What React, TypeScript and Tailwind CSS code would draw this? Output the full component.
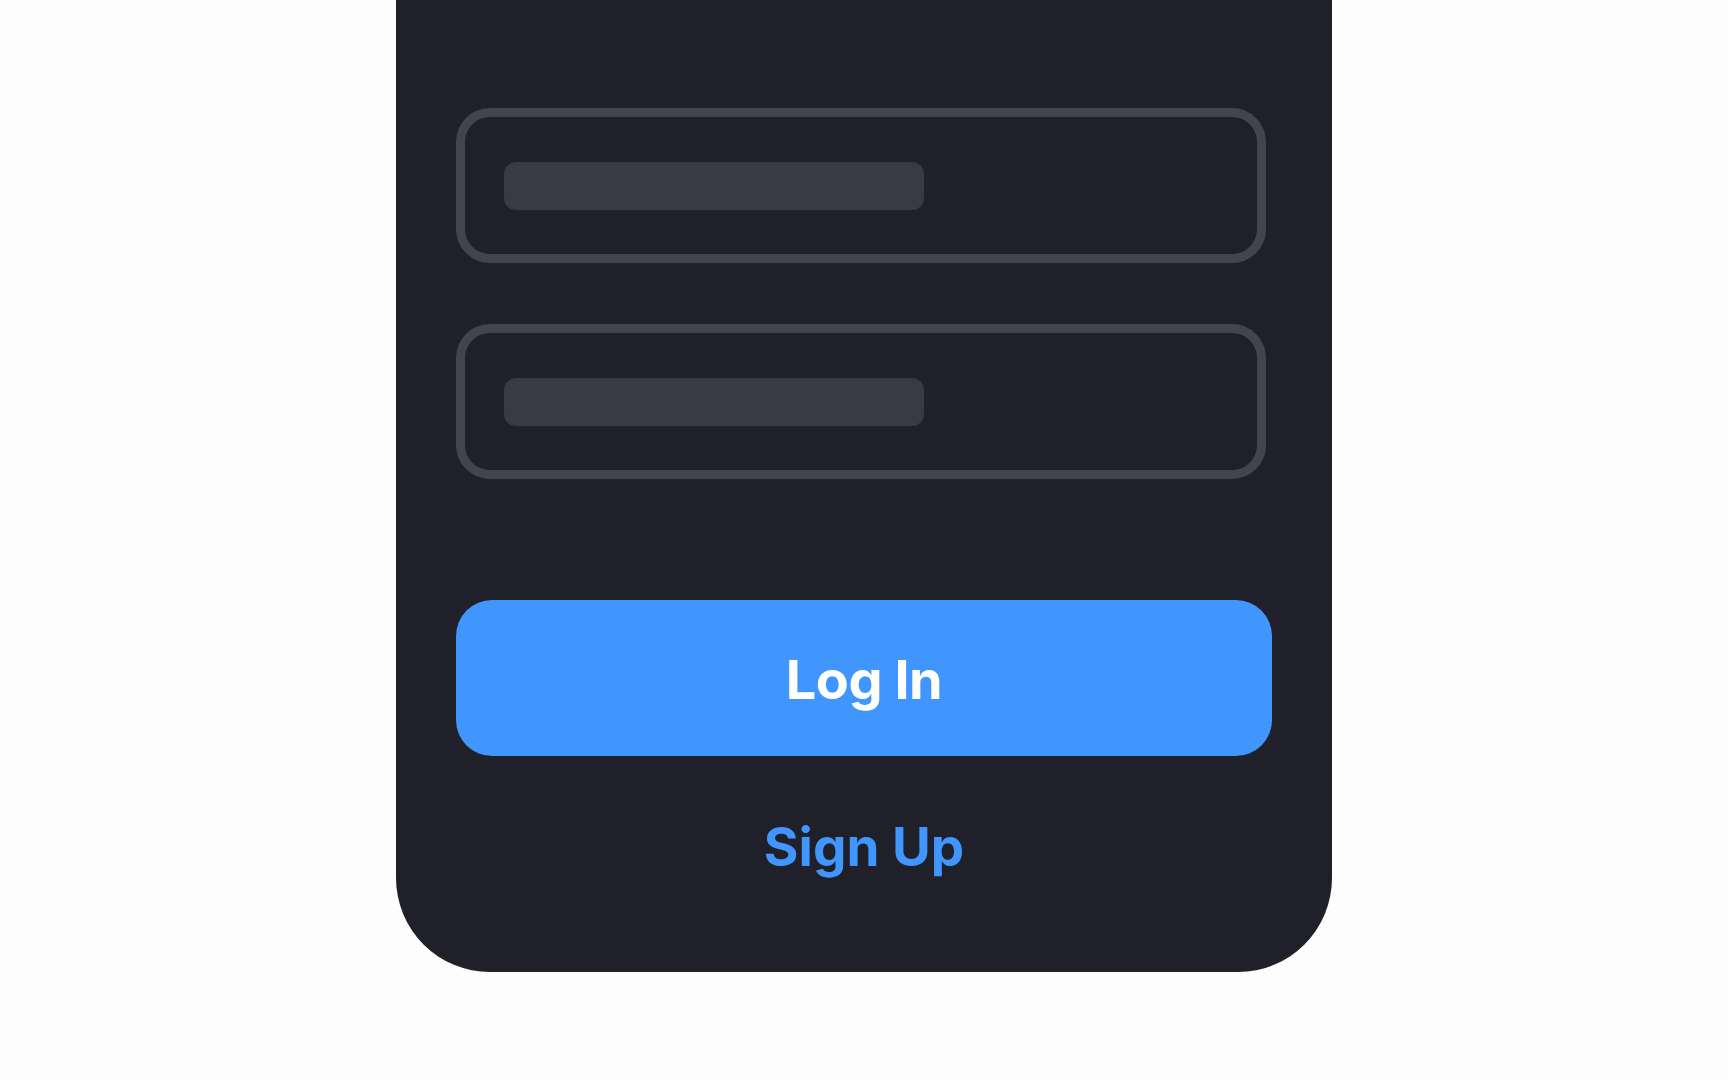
import React from "react";

// Empty field shell with a skeleton bar where the label/value would sit
function FieldSkeleton() {
  return (
    <div className="flex h-[155px] w-[810px] items-center rounded-[34px] border-[9px] border-[#44444e] px-[39px]">
      <div className="h-[48px] w-[420px] rounded-[12px] bg-[#3a3a45]" />
    </div>
  );
}

export default function App() {
  return (
    <div
      className="flex min-h-[1080px] w-full justify-center bg-[#fdfdfd]"
      style={{ fontFamily: "Inter, 'Noto Sans', 'Liberation Sans', sans-serif" }}
    >
      <div className="flex h-[972px] w-[936px] flex-col rounded-b-[94px] bg-[#20202a] px-[60px] pt-[108px]">
        <div className="flex flex-col gap-[61px]">
          <FieldSkeleton />
          <FieldSkeleton />
        </div>

        <button className="mt-[121px] flex h-[156px] w-[816px] items-center justify-center rounded-[36px] bg-[#4096fd] pt-[3px] text-[54px] font-bold leading-none tracking-[-0.5px] text-white">
          Log In
        </button>

        <button className="mt-[65px] self-center text-[53px] font-bold leading-none text-[#4096fd]">
          Sign Up
        </button>
      </div>
    </div>
  );
}
